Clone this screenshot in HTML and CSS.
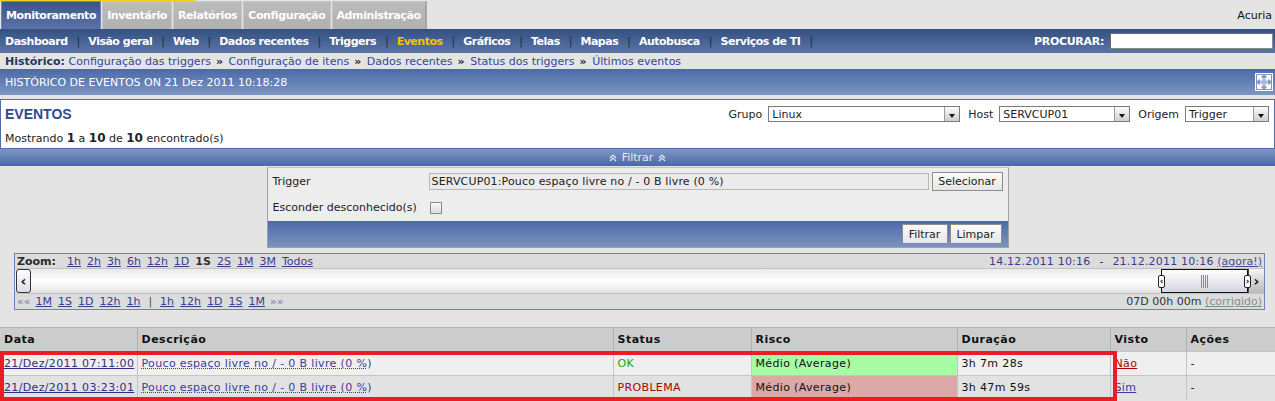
FILE: index.html
```html
<!DOCTYPE html>
<html lang="pt">
<head>
<meta charset="utf-8">
<title>Eventos</title>
<link rel="stylesheet" href="styles.css">
</head>
<body>
<div class="topline"></div>
<div class="topbar">
  <ul class="tabs">
    <li class="tab active">Monitoramento</li>
    <li class="tab">Inventário</li>
    <li class="tab">Relatórios</li>
    <li class="tab">Configuração</li>
    <li class="tab last">Administração</li>
  </ul>
  <div class="user">Acuria</div>
</div>

<div class="menubar">
  <nav class="submenu">
    <a>Dashboard</a><span class="sep">|</span>
    <a>Visão geral</a><span class="sep">|</span>
    <a>Web</a><span class="sep">|</span>
    <a>Dados recentes</a><span class="sep">|</span>
    <a>Triggers</a><span class="sep">|</span>
    <a class="current">Eventos</a><span class="sep">|</span>
    <a>Gráficos</a><span class="sep">|</span>
    <a>Telas</a><span class="sep">|</span>
    <a>Mapas</a><span class="sep">|</span>
    <a>Autobusca</a><span class="sep">|</span>
    <a>Serviços de TI</a><span class="sep">|</span>
  </nav>
  <div class="search"><span class="search-label">PROCURAR:</span><span class="search-input"></span></div>
</div>

<div class="crumbs">
  <b>Histórico:</b>
  <a>Configuração das triggers</a><span class="raquo">»</span>
  <a>Configuração de itens</a><span class="raquo">»</span>
  <a>Dados recentes</a><span class="raquo">»</span>
  <a>Status dos triggers</a><span class="raquo">»</span>
  <a>Últimos eventos</a>
</div>

<div class="pagehead">
  <span>HISTÓRICO DE EVENTOS ON 21 Dez 2011 10:18:28</span>
  <svg class="fullscreen" width="18" height="18" viewBox="0 0 18 18">
    <rect x="0.5" y="0.5" width="17" height="17" fill="#8299c6" stroke="#ffffff"/>
    <circle cx="9" cy="9" r="4.5" fill="#a9b9d9"/>
    <g fill="#ffffff">
      <path d="M2 2h6l-2 2 2 2-2 2-2-2-2 2z"/>
      <path d="M16 2v6l-2-2-2 2-2-2 2-2-2-2z"/>
      <path d="M2 16v-6l2 2 2-2 2 2-2 2 2 2z"/>
      <path d="M16 16h-6l2-2-2-2 2-2 2 2 2-2z"/>
    </g>
  </svg>
</div>

<div class="eventsbox">
  <div class="eb-top">
    <h1>EVENTOS</h1>
    <div class="selectors">
      <span class="sel-label">Grupo</span>
      <span class="select w-grupo"><span class="sel-text">Linux</span><span class="sel-btn"></span></span>
      <span class="sel-label">Host</span>
      <span class="select w-host"><span class="sel-text">SERVCUP01</span><span class="sel-btn"></span></span>
      <span class="sel-label">Origem</span>
      <span class="select w-origem"><span class="sel-text">Trigger</span><span class="sel-btn"></span></span>
    </div>
  </div>
  <div class="eb-count">Mostrando <b>1</b> a <b>10</b> de <b>10</b> encontrado(s)</div>
</div>

<div class="filterbar">
  <svg width="8" height="8" viewBox="0 0 8 8"><path d="M1 4l3-3 3 3M1 7l3-3 3 3" fill="none" stroke="#e4e9f2" stroke-width="1.2"/></svg>
  <span>Filtrar</span>
  <svg width="8" height="8" viewBox="0 0 8 8"><path d="M1 4l3-3 3 3M1 7l3-3 3 3" fill="none" stroke="#e4e9f2" stroke-width="1.2"/></svg>
</div>

<div class="filterform">
  <div class="ff-row r1">
    <span class="ff-label">Trigger</span>
    <span class="ff-input">SERVCUP01:Pouco espaço livre no / - 0 B livre (0 %)</span>
    <span class="btn">Selecionar</span>
  </div>
  <div class="ff-row r2">
    <span class="ff-label">Esconder desconhecido(s)</span>
    <span class="checkbox"></span>
  </div>
  <div class="ff-foot">
    <span class="btn b-filtrar">Filtrar</span>
    <span class="btn b-limpar">Limpar</span>
  </div>
</div>

<div class="zoombox">
  <div class="zrow ztop">
    <b class="zlabel">Zoom:</b>
    <a>1h</a><a>2h</a><a>3h</a><a>6h</a><a>12h</a><a>1D</a><b class="zcur">1S</b><a>2S</a><a>1M</a><a>3M</a><a>Todos</a>
    <span class="zdates"><span class="zd">14.12.2011 10:16</span><span class="zdash">-</span><span class="zd">21.12.2011 10:16</span> <a class="znow">(agora!)</a></span>
  </div>
  <div class="ztrack">
    <span class="zarrow zleft">&lsaquo;</span>
    <span class="thumb">
      <span class="handle hl">&lsaquo;</span>
      <span class="grip"></span>
      <span class="handle hr">&rsaquo;</span>
    </span>
    <span class="zarrow zright">&rsaquo;</span>
  </div>
  <div class="zrow zbot">
    <span class="zq">««</span>
    <a>1M</a><a>1S</a><a>1D</a><a>12h</a><a>1h</a><span class="zpipe">|</span><a>1h</a><a>12h</a><a>1D</a><a>1S</a><a>1M</a>
    <span class="zq">»»</span>
    <span class="zperiod">07D 00h 00m <a class="zfix">(corrigido)</a></span>
  </div>
</div>

<div class="tablewrap">
  <table class="events">
    <colgroup>
      <col style="width:137px"><col style="width:476px"><col style="width:138px"><col style="width:206px"><col style="width:153px"><col style="width:76px"><col style="width:89px">
    </colgroup>
    <thead>
      <tr><th>Data</th><th>Descrição</th><th>Status</th><th>Risco</th><th>Duração</th><th>Visto</th><th>Ações</th></tr>
    </thead>
    <tbody>
      <tr class="odd">
        <td><a class="date">21/Dez/2011 07:11:00</a></td>
        <td><a class="desc">Pouco espaço livre no / - 0 B livre (0 %)</a></td>
        <td class="ok">OK</td>
        <td class="risk-ok">Médio (Average)</td>
        <td>3h 7m 28s</td>
        <td><a class="ack-no">Não</a></td>
        <td>-</td>
      </tr>
      <tr class="even">
        <td><a class="date">21/Dez/2011 03:23:01</a></td>
        <td><a class="desc">Pouco espaço livre no / - 0 B livre (0 %)</a></td>
        <td class="problem">PROBLEMA</td>
        <td class="risk-bad">Médio (Average)</td>
        <td>3h 47m 59s</td>
        <td><a class="ack-yes">Sim</a></td>
        <td>-</td>
      </tr>
    </tbody>
  </table>
  <div class="highlight"></div>
</div>
</body>
</html>
```

FILE: styles.css
```css
* { box-sizing: border-box; }

body {
  margin: 0;
  width: 1275px;
  height: 401px;
  overflow: hidden;
  background: #e4e4e4;
  font-family: "DejaVu Sans", Verdana, sans-serif;
  font-size: 11px;
  color: #222;
}

a { cursor: pointer; }

/* top line and tabs */
.topline {
  width: 195px;
  height: 1px;
  background: #f2cf1a;
}

.topbar {
  display: flex;
  justify-content: space-between;
  align-items: center;
  height: 28px;
}

.tabs {
  list-style: none;
  margin: 0 0 0 1px;
  padding: 0;
  display: flex;
  height: 28px;
}

.tab {
  height: 28px;
  line-height: 27px;
  padding: 0 4px;
  margin-right: 1px;
  font-weight: bold;
  letter-spacing: -0.4px;
  color: #fff;
  background: linear-gradient(#bcbcbc, #b0b0b0);
  border: 1px solid #c6c6c6;
  border-bottom: none;
}

.tab.last { border-right: 2px solid #a6a6a6; }

.tab.active {
  background: linear-gradient(#3a5686, #5b72a6);
  border-color: #7283bb;
}

.user {
  color: #111;
  padding-right: 3px;
  font-size: 11px;
}

/* sub menu */
.menubar {
  height: 24px;
  display: flex;
  justify-content: space-between;
  align-items: center;
  background: linear-gradient(#33507f, #5b74a8);
}

.submenu {
  padding-left: 5px;
  display: flex;
  align-items: center;
}

.submenu a {
  color: #fff;
  font-weight: bold;
  letter-spacing: -0.5px;
}

.submenu a.current { color: #f5c400; }

.submenu .sep {
  color: #1b2a4c;
  margin: 0 8px 0 9px;
}

.search {
  display: flex;
  align-items: center;
  padding-right: 2px;
}

.search-label {
  color: #fff;
  font-weight: bold;
  letter-spacing: -0.3px;
  margin-right: 6px;
}

.search-input {
  width: 163px;
  height: 16px;
  background: #fff;
  border: 1px solid #8a8a8a;
  border-top-color: #6a6a6a;
  border-left-color: #6a6a6a;
}

/* breadcrumbs */
.crumbs {
  height: 16px;
  line-height: 17px;
  padding-left: 5px;
  color: #2a3b63;
}

.crumbs b { color: #24375f; }

.crumbs a { color: #35459a; }

.crumbs .raquo {
  font-weight: bold;
  color: #1a2340;
  margin: 0 2px 0 5px;
}

/* page header */
.pagehead {
  height: 26px;
  display: flex;
  justify-content: space-between;
  align-items: center;
  padding: 0 2px 0 5px;
  color: #fff;
  background: linear-gradient(#4b6aa7, #7c95c3);
}

.fullscreen { display: block; }

/* events box */
.eventsbox {
  margin-top: 4px;
  height: 50px;
  background: #fff;
  border: 1px solid #4f6ea6;
  padding: 0 5px 0 4px;
}

.eb-top {
  height: 28px;
  display: flex;
  justify-content: space-between;
  align-items: center;
}

.eb-top h1 {
  margin: 0;
  font-family: "Liberation Sans", Arial, sans-serif;
  font-size: 14px;
  font-weight: bold;
  color: #2c4b8d;
}

.selectors {
  display: flex;
  align-items: center;
}

.sel-label {
  margin: 0 6px 0 8px;
  color: #222;
}

.select {
  display: flex;
  align-items: center;
  justify-content: space-between;
  height: 16px;
  background: #fff;
  border: 1px solid #7b7b7b;
  padding-left: 3px;
}

.w-grupo { width: 192px; }
.w-host { width: 131px; }
.w-origem { width: 84px; }

.sel-btn {
  width: 15px;
  height: 14px;
  border-left: 1px solid #9a9a9a;
  background: linear-gradient(#fafafa, #cfcfcf);
  position: relative;
}

.sel-btn::after {
  content: "";
  position: absolute;
  left: 4px;
  top: 7px;
  border-left: 3px solid transparent;
  border-right: 3px solid transparent;
  border-top: 4px solid #111;
}

.eb-count {
  height: 20px;
  line-height: 20px;
  color: #222;
}

.eb-count b { font-size: 12px; }

/* filter bar */
.filterbar {
  height: 17px;
  display: flex;
  align-items: center;
  justify-content: center;
  gap: 5px;
  color: #e4e9f2;
  background: linear-gradient(#7f97c4, #4a68a5);
}

/* filter form */
.filterform {
  width: 742px;
  margin: 1px auto 0;
  background: #ededed;
  border: 1px solid #a2a2a2;
  border-top-color: #c4c4c4;
}

.ff-row {
  display: flex;
  align-items: center;
  padding-left: 5px;
}

.ff-row.r1 { height: 26px; }
.ff-row.r2 { height: 27px; }

.ff-label {
  width: 156px;
  color: #222;
}

.ff-input {
  width: 500px;
  height: 17px;
  line-height: 15px;
  padding-left: 2px;
  background: #ebebeb;
  border: 1px solid #b8b8b8;
  color: #222;
  letter-spacing: 0.15px;
  white-space: nowrap;
}

.btn {
  display: inline-flex;
  align-items: center;
  justify-content: center;
  height: 19px;
  padding: 0 4px;
  background: linear-gradient(#fbfbfb, #e6e6e6);
  border: 1px solid #8d8d8d;
  color: #222;
}

.r1 .btn { margin-left: 3px; width: 71px; }

.checkbox {
  width: 12px;
  height: 12px;
  margin-left: 1px;
  border: 1px solid #8a8a8a;
  background: linear-gradient(#f8f8f8, #dcdcdc);
}

.ff-foot {
  height: 26px;
  display: flex;
  justify-content: flex-end;
  align-items: center;
  gap: 2px;
  padding-right: 6px;
  background: linear-gradient(#4c6aa6, #7b93c1);
}

.ff-foot .btn { height: 20px; }
.b-filtrar { width: 46px; }
.b-limpar { width: 52px; }

/* zoom / scroll box */
.zoombox {
  margin: 5px 10px 0 14px;
  height: 57px;
  border: 1px solid #6a84b9;
  background: #dcdcdc;
}

.zrow {
  display: flex;
  align-items: center;
  padding: 0 2px;
  white-space: nowrap;
}

.ztop { height: 14px; }
.zbot { height: 15px; }

.zlabel {
  color: #2a2a2a;
  margin-right: 5px;
}

.zrow a {
  color: #3b3b8e;
  text-decoration: underline;
  margin-left: 6px;
}

.zcur {
  margin-left: 6px;
  color: #333;
}

.zdates {
  margin-left: auto;
  color: #3b3b8e;
}

.zd { letter-spacing: 0.2px; }

.zdash {
  color: #333;
  margin: 0 9px;
}

.zdates a.znow {
  margin-left: 0;
  color: #4b4b99;
}

.ztrack {
  height: 26px;
  display: flex;
  align-items: stretch;
  border-top: 1px solid #c2c2c2;
  border-bottom: 1px solid #c2c2c2;
  background: linear-gradient(#e9e9e9, #ffffff 45%, #f5f5f5 75%, #dedede);
}

.zarrow {
  width: 16px;
  display: flex;
  align-items: center;
  justify-content: center;
  font-weight: bold;
  font-size: 14px;
  color: #111;
}

.zleft {
  margin-left: 1px;
  width: 15px;
  background: linear-gradient(#ffffff, #dcdce6);
  border: 1px solid #333;
  border-radius: 3px;
}

.zright {
  background: linear-gradient(#f4f4f4, #b9b9b9);
  border-left: 1px solid #444;
}

.thumb {
  margin-left: auto;
  width: 87px;
  position: relative;
  border: 1px solid #111;
  background: linear-gradient(#ffffff, #d5d5e2);
  display: flex;
  align-items: center;
  justify-content: center;
}

.grip {
  width: 8px;
  height: 13px;
  background: repeating-linear-gradient(90deg, #8a8a8a 0 1px, transparent 1px 2px);
}

.handle {
  position: absolute;
  top: 5px;
  width: 7px;
  height: 13px;
  border: 1px solid #222;
  border-radius: 2px;
  background: #fff;
  font-size: 9px;
  font-weight: bold;
  line-height: 10px;
  text-align: center;
  color: #111;
}

.hl { left: -4px; }
.hr { right: -4px; }

.zq {
  color: #6e7fb3;
}

.zbot .zq + a { margin-left: 5px; }
.zbot a + .zq { margin-left: 5px; }

.zpipe {
  margin-left: 8px;
  margin-right: 2px;
  color: #555;
}

.zperiod {
  margin-left: auto;
  color: #333;
}

.zperiod a.zfix {
  margin-left: 0;
  color: #8c8c8c;
}

/* table */
.tablewrap {
  position: relative;
  margin-top: 17px;
}

.events {
  width: 1275px;
  border-collapse: collapse;
  table-layout: fixed;
}

.events th {
  height: 24px;
  text-align: left;
  padding: 0 4px;
  font-weight: bold;
  letter-spacing: 0.5px;
  color: #111;
  background: #cccccc;
  border-top: 1px solid #b4b4b4;
  border-left: 1px solid #b0b0b0;
}

.events th:first-child,
.events td:first-child { border-left: none; }

.events td {
  height: 24px;
  padding: 0 4px;
  white-space: nowrap;
  overflow: hidden;
  letter-spacing: 0.35px;
  color: #111;
  border-top: 1px solid #c4c4c4;
  border-left: 1px solid #c4c4c4;
}

.events tr.odd td { background: #efefef; }
.events tr.even td { background: #e2e2e2; }

.events tr.odd td.risk-ok { background: #a9fca6; }
.events tr.even td.risk-bad { background: #dba9a8; }

a.date {
  color: #2e2e86;
  text-decoration: underline;
}

a.desc {
  color: #3b3b9c;
  text-decoration: underline dotted;
}

td.ok { color: #12a412; }
td.problem { color: #aa0000; }

a.ack-no {
  color: #aa0000;
  text-decoration: underline;
}

a.ack-yes {
  color: #3b3b9c;
  text-decoration: underline;
}

.highlight {
  position: absolute;
  left: 0;
  top: 24px;
  width: 1117px;
  height: 50px;
  border: 4px solid #ec1c24;
  pointer-events: none;
}
```
